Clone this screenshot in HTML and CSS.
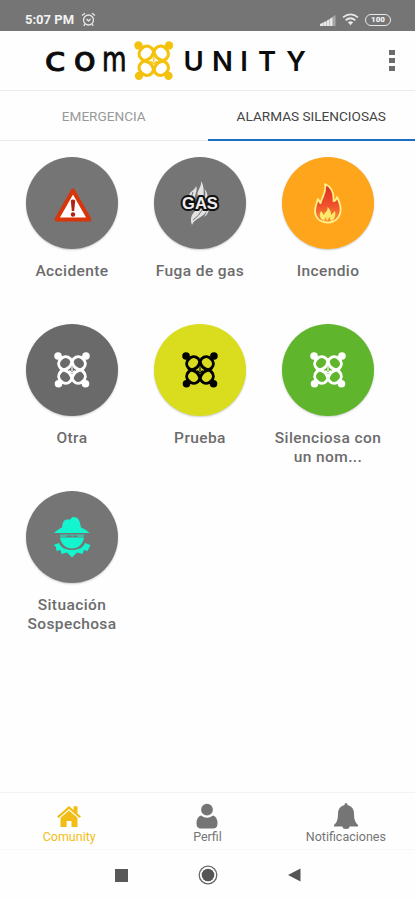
FILE: index.html
```html
<!DOCTYPE html>
<html lang="es">
<head>
    <meta charset="UTF-8" />
    <meta name="viewport" content="width=device-width, initial-scale=1.0" />
    <title>Comunity</title>
    <link rel="stylesheet" href="styles.css">
</head>
<body>
<!-- Nudo del logotipo, se reutiliza en varias alarmas -->
<svg class="defs" width="0" height="0">
    <symbol id="nudo" viewBox="0 0 40 40">
        <g fill="none" stroke="currentColor" stroke-width="3.300">
            <path d="M20 15.500C15 15.500 14 12.500 9.500 12.500C5 12.500 2.500 16 2.500 20S5 27.500 9.500 27.500C14 27.500 15 24.500 20 24.500S26 27.500 30.500 27.500C35 27.500 37.500 24 37.500 20S35 12.500 30.500 12.500C26 12.500 25 15.500 20 15.500z" transform="rotate(45 20 20)" />
            <path d="M20 15.500C15 15.500 14 12.500 9.500 12.500C5 12.500 2.500 16 2.500 20S5 27.500 9.500 27.500C14 27.500 15 24.500 20 24.500S26 27.500 30.500 27.500C35 27.500 37.500 24 37.500 20S35 12.500 30.500 12.500C26 12.500 25 15.500 20 15.500z" transform="rotate(-45 20 20)" />
            <path d="M20 16v5M17 20.500l3 2.500 3-2.500" stroke-width="1.300" />
        </g>
        <g fill="currentColor">
            <circle cx="4.500" cy="4.500" r="4.200" />
            <circle cx="35.500" cy="4.500" r="4.200" />
            <circle cx="5" cy="35.300" r="4.200" />
            <circle cx="35" cy="35.300" r="4.200" />
        </g>
    </symbol>
</svg>

<div class="app">
    <div class="status">
        <span class="hora">5:07 PM</span>
        <svg width="15" height="15" viewBox="0 0 15 15" fill="none" stroke="#e6e6e6" stroke-width="1.3">
            <circle cx="7.5" cy="8" r="5" />
            <path d="M1 3.6L4 1.2M14 3.6L11 1.2M5.5 7l2 2 2-2M4 12.2l-1.3 1.5M11 12.2l1.3 1.5" />
        </svg>
        <div class="status-der">
            <svg width="16" height="12" viewBox="0 0 16 12" fill="#e8e8e8">
                <path d="M0 12V10l3.300-1.500V12zM3.500 12V8.300l2.900-1.400V12zM6.700 12V6.700l2.900-1.600V12zM9.900 12V4.800l2.800-1.700V12z" />
                <path d="M13.1 12V2.6L15.5 1v11z" opacity=".45" />
            </svg>
            <svg class="wifi" width="17" height="13" viewBox="0 0 17 13" fill="none" stroke="#e8e8e8" stroke-width="1.8">
                <path d="M1 4.4q7.500-6 15 0M3.700 7.200q4.800-3.800 9.600 0" />
                <path d="M5.800 9.300q2.700-2 5.400 0L8.500 12.200z" fill="#e8e8e8" stroke="none" />
            </svg>
            <span class="bateria">100</span>
        </div>
    </div>

    <header class="header">
        <svg class="logo" width="264" height="44" viewBox="44 39 264 44">
            <g class="logo-com">
                <text x="44.500" y="70.500" textLength="21.500" lengthAdjust="spacingAndGlyphs">c</text>
                <text x="73.500" y="70.500" textLength="22.500" lengthAdjust="spacingAndGlyphs">o</text>
                <text x="102" y="70.500" textLength="24.500" lengthAdjust="spacingAndGlyphs">m</text>
            </g>
            <use href="#nudo" x="134" y="41" width="39.500" height="39.500" class="amarillo" />
            <text class="logo-unity" x="193.500 222.500 244 267 296" y="71">UNITY</text>
        </svg>
        <div class="menu"><i></i><i></i><i></i></div>
    </header>

    <nav class="tabs">
        <a class="tab">EMERGENCIA</a>
        <a class="tab activa">ALARMAS SILENCIOSAS</a>
    </nav>

    <main class="alarmas">
        <div class="alarma">
            <div class="circulo gris">
                <svg class="triangulo" width="40" height="36" viewBox="0 0 40 36">
                    <path d="M20 3.500L36.500 32.500H3.500z" fill="#fff" stroke="#d9350b" stroke-width="4" stroke-linejoin="round" />
                    <path d="M17.800 13.500q2.200-2 4.400 0L21.200 24h-2.400z" fill="#b32210" />
                    <circle cx="20" cy="27.500" r="2.200" fill="#b32210" />
                </svg>
            </div>
            <span class="nombre">Accidente</span>
        </div>
        <div class="alarma">
            <div class="circulo gris">
                <svg class="gas" width="42" height="46" viewBox="0 0 42 46">
                    <path d="M22 1C26 8 24 11 25 17H18C17 10 23 8 22 1zM17 6C19 10 16 13 16 18H10C9 11 16 11 17 6zM25.500 9Q29 13 28.500 18H26Q27 13 25.500 9z" fill="#e2e2e2" />
                    <path d="M28 29C27 37 15 38 13 45C10 37 14 33 18 29zM30 29Q29.500 34 25 37Q28 33 28 29z" fill="#e2e2e2" />
                    <path d="M20 7Q17 13 18 17M23 30Q20 36 14 40M14 12Q13 14 13 17" fill="none" stroke="#757575" stroke-width="1" />
                    <text class="gas-texto" x="21" y="29">GAS</text>
                </svg>
            </div>
            <span class="nombre">Fuga de gas</span>
        </div>
        <div class="alarma">
            <div class="circulo naranja">
                <svg width="30" height="42" viewBox="0 0 30 42">
                    <defs>
                        <linearGradient id="fuego" x1="0" y1="0" x2="0" y2="1">
                            <stop offset="0" stop-color="#d92b26" />
                            <stop offset=".55" stop-color="#f0512b" />
                            <stop offset="1" stop-color="#fb9a35" />
                        </linearGradient>
                    </defs>
                    <path d="M12 2C19 5 21 11 20.500 19C22.500 19 23.500 17 24 15C28 23 29 30 25.500 35C23 39 18 41 14 40.500C7 40 2 36 2 29C2 24 4 21 5 17C6 19 6.500 20 7.500 21C9 15 14 10 12 2z" fill="url(#fuego)" stroke="#fff08a" stroke-width="1.800" stroke-linejoin="round" />
                    <path d="M11 39C6 36 6 32 8 29L11 33C12 29 15 30 14.500 25C18 28 18 31 18 33L22 29C23 33 22 37 18 39L16.500 35L14 39L12.500 35z" fill="#ffe96b" />
                </svg>
            </div>
            <span class="nombre">Incendio</span>
        </div>
        <div class="alarma">
            <div class="circulo gris-oscuro blanco">
                <svg width="36" height="36"><use href="#nudo" /></svg>
            </div>
            <span class="nombre">Otra</span>
        </div>
        <div class="alarma">
            <div class="circulo lima">
                <svg width="36" height="36"><use href="#nudo" /></svg>
            </div>
            <span class="nombre">Prueba</span>
        </div>
        <div class="alarma">
            <div class="circulo verde blanco">
                <svg width="36" height="36"><use href="#nudo" /></svg>
            </div>
            <span class="nombre">Silenciosa con<br>un nom...</span>
        </div>
        <div class="alarma">
            <div class="circulo gris">
                <svg width="38" height="42" viewBox="0 0 38 42" fill="#12f5cf">
                    <path d="M9 11.500C10 5 11 3 16 3.500C18 4 18 1 20.500 1C26 1 27 6 28 11.500C31 12.500 34 14.500 36.500 17H1C4 14 7 12.500 9 11.500z" />
                    <path d="M6.500 18.500H31.500L30.500 21H25L23 19.500H21L19.500 21L17.500 19.500H15L13 21H7.500z" opacity=".55" />
                    <path d="M7 21.500H31C29.500 29 25 32.500 19 32.500S8.500 29 7 21.500z" />
                    <path d="M6 27C8 32 13 34 19 34S30 32 32 27L37.500 29L34.500 35L31 34L29.500 38L24 36.500L19 41.500L14 36.500L8.500 38L7.500 34L3.500 35L3 31L.5 29z" />
                </svg>
            </div>
            <span class="nombre">Situación<br>Sospechosa</span>
        </div>
    </main>

    <footer class="barra">
        <a class="item amarillo">
            <svg width="26" height="26" viewBox="0 0 26 26" fill="currentColor">
                <path d="M1 13.500L13 3L17.500 6.900V3.200H21.500V10.400L25 13.500L23.500 15L13 6L2.500 15z" />
                <path d="M4.500 14.800L13 7.600L21.500 14.800V24H15.500V18H10.700V24H4.500z" />
            </svg>
            <span>Comunity</span>
        </a>
        <a class="item">
            <svg width="26" height="26" viewBox="0 0 26 26" fill="currentColor">
                <circle cx="13" cy="6.700" r="5.900" />
                <path d="M7 12.500Q13 17 19 12.500Q23.500 14 23.500 20.500Q23.500 25.500 19 25.500H7Q2.500 25.500 2.500 20.500Q2.500 14 7 12.500z" />
            </svg>
            <span>Perfil</span>
        </a>
        <a class="item">
            <svg width="26" height="26" viewBox="0 0 26 26" fill="currentColor">
                <path d="M13 0Q14.500 0 14.500 2Q21 3.500 21 11Q21 19 25 22V23.500H16.500Q16.500 26 13 26T9.500 23.500H1V22Q5 19 5 11Q5 3.500 11.500 2Q11.500 0 13 0z" />
            </svg>
            <span>Notificaciones</span>
        </a>
    </footer>

    <div class="sistema">
        <svg width="13" height="13"><rect width="13" height="13" fill="#585858" /></svg>
        <svg width="20" height="20" viewBox="0 0 20 20">
            <circle cx="10" cy="10" r="8.800" fill="none" stroke="#666" stroke-width="1.300" />
            <circle cx="10" cy="10" r="6.300" fill="#555" />
        </svg>
        <svg width="13" height="14" viewBox="0 0 13 14"><path d="M0 7L12.500 .5v13z" fill="#555" /></svg>
    </div>
</div>
</body>
</html>
```

FILE: styles.css
```css
body {
    margin: 0;
    background-color: #fefefe;
    font-family: Roboto, "Liberation Sans", sans-serif;
}

svg {
    display: block;
    flex-shrink: 0;
}

.defs {
    display: none;
}

.app {
    display: flex;
    flex-direction: column;
    height: 900px;
    overflow: hidden;
}

/* Barra de estado */
.status {
    display: flex;
    align-items: center;
    box-sizing: border-box;
    height: 31px;
    padding: 8px 24px 0 25px;
    background-color: #757575;
    color: #f2f2f2;
}

.hora {
    width: 56px;
    font-size: 13px;
    font-weight: 700;
    white-space: nowrap;
}

.status-der {
    display: flex;
    align-items: center;
    margin-left: auto;
}

.wifi {
    margin: 0 6px;
}

.bateria {
    box-sizing: border-box;
    width: 26px;
    height: 12px;
    border: 1.5px solid #e8e8e8;
    border-radius: 6px;
    font-size: 8px;
    font-weight: 900;
    line-height: 10px;
    text-align: center;
}

/* Cabecera */
.header {
    display: flex;
    align-items: center;
    justify-content: space-between;
    box-sizing: border-box;
    height: 60px;
    padding: 0 20px 0 44px;
    border-bottom: 1px solid #ececec;
}

.logo text {
    fill: #0b0b0b;
}

.logo-com {
    font-family: "DejaVu Sans", sans-serif;
    font-size: 34px;
    stroke: #0b0b0b;
    stroke-width: 0.9px;
}

.logo-unity {
    font-family: Inter, sans-serif;
    font-size: 27.5px;
    font-weight: 600;
    text-anchor: middle;
}

.amarillo {
    color: #f4c20d;
}

.menu {
    display: flex;
    flex-direction: column;
    gap: 3px;
}

.menu i {
    width: 6px;
    height: 5px;
    background-color: #6b6b6b;
}

/* Pestañas */
.tabs {
    display: flex;
    height: 50px;
}

.tab {
    flex: 1;
    box-sizing: border-box;
    border-bottom: 1px solid #e6eaec;
    color: #999;
    font-size: 13.600px;
    line-height: 51px;
    text-align: center;
    white-space: nowrap;
}

.activa {
    border-bottom: 2px solid #1a6fc4;
    color: #444;
}

/* Alarmas */
.alarmas {
    display: grid;
    grid-template-columns: repeat(3, 128px);
    grid-auto-rows: 167px;
    align-content: start;
    flex: 1;
    padding: 16px 0 0 8px;
}

.alarma {
    display: flex;
    flex-direction: column;
    align-items: center;
}

.circulo {
    display: flex;
    align-items: center;
    justify-content: center;
    width: 92px;
    height: 92px;
    border-radius: 50%;
    box-shadow: 0 1px 2px rgba(0, 0, 0, 0.2);
}

.gris {
    background-color: #757575;
}

.gris-oscuro {
    background-color: #6a6a6a;
}

.naranja {
    background-color: #fea51c;
}

.lima {
    background-color: #dadd1d;
}

.verde {
    background-color: #5fb52b;
}

.blanco {
    color: #fff;
}

.triangulo {
    margin: 3px 0 0 2px;
}

.gas {
    overflow: visible;
}

.gas-texto {
    fill: #eee;
    stroke: #111;
    stroke-width: 4px;
    stroke-linejoin: round;
    paint-order: stroke;
    font-size: 16.500px;
    font-weight: 700;
    font-family: "Liberation Sans", sans-serif;
    text-anchor: middle;
}

.nombre {
    margin-top: 13px;
    color: #6c6c6c;
    font-size: 15.500px;
    font-weight: 500;
    letter-spacing: 0.4px;
    line-height: 18.500px;
    text-align: center;
    white-space: nowrap;
}

/* Menú inferior */
.barra {
    display: flex;
    box-sizing: border-box;
    height: 58px;
    border-top: 1px solid #f3f3f3;
    border-bottom: 1px solid #f8f8f8;
}

.item {
    display: flex;
    flex: 1;
    flex-direction: column;
    align-items: center;
    padding-top: 10px;
    color: #757575;
    font-size: 12.500px;
    line-height: 16px;
}

.amarillo.item {
    color: #f2bd16;
}

/* Botones del sistema */
.sistema {
    display: flex;
    align-items: center;
    justify-content: center;
    gap: 70px;
    height: 50px;
}
```
